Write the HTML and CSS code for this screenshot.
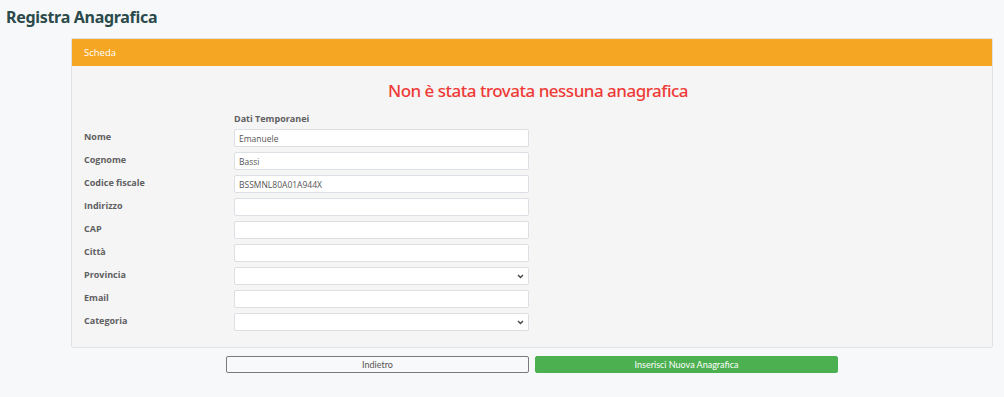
FILE: index.html
```html
<!DOCTYPE html>
<html lang="it">
<head>
    <meta charset="UTF-8">
    <meta name="viewport" content="width=device-width, initial-scale=1.0">
    <title>Registra Anagrafica</title>
    <link rel="stylesheet" href="styles.css">
</head>
<body>
    <h1 class="page-title">Registra Anagrafica</h1>

    <div class="content">
        <div class="card">
            <div class="card-header">Scheda</div>
            <div class="card-body">
                <h2 class="not-found">Non è stata trovata nessuna anagrafica</h2>

                <form class="form-grid">
                    <span></span>
                    <span class="col-title">Dati Temporanei</span>

                    <label for="nome">Nome</label>
                    <input type="text" id="nome" value="Emanuele">

                    <label for="cognome">Cognome</label>
                    <input type="text" id="cognome" value="Bassi">

                    <label for="cf">Codice fiscale</label>
                    <input type="text" id="cf" value="BSSMNL80A01A944X">

                    <label for="indirizzo">Indirizzo</label>
                    <input type="text" id="indirizzo">

                    <label for="cap">CAP</label>
                    <input type="text" id="cap">

                    <label for="citta">Città</label>
                    <input type="text" id="citta">

                    <label for="provincia">Provincia</label>
                    <select id="provincia"><option></option></select>

                    <label for="email">Email</label>
                    <input type="text" id="email">

                    <label for="categoria">Categoria</label>
                    <select id="categoria"><option></option></select>
                </form>
            </div>
        </div>

        <div class="actions">
            <button class="btn btn-back">Indietro</button>
            <button class="btn btn-save">Inserisci Nuova Anagrafica</button>
        </div>
    </div>
</body>
</html>
```

FILE: styles.css
```css
body {
    margin: 0;
    background-color: #f7f8fa;
    font-family: "Open Sans", sans-serif;
    color: #555;
}
.page-title {
    margin: 0;
    padding: 5px 6px 0;
    height: 33px;
    font-family: "Noto Sans", sans-serif;
    font-size: 16px;
    line-height: 24px;
    font-weight: 700;
    letter-spacing: -0.3px;
    color: #2b4a4b;
}
.content {
    margin: 0 11px 0 71px;
}
.card {
    border: 1px solid #e2e2e2;
    border-radius: 2px;
    background-color: #f5f5f5;
}
.card-header {
    height: 27px;
    line-height: 27px;
    padding-left: 12px;
    background-color: #f5a623;
    color: #fff;
    font-size: 9.5px;
}
.card-body {
    padding: 13px 0 16px 12px;
}
.not-found {
    margin: 0 0 10px;
    text-align: center;
    font-family: "Noto Sans", sans-serif;
    font-size: 17px;
    line-height: 24px;
    font-weight: 500;
    letter-spacing: -0.5px;
    color: #ef3b37;
}
.form-grid {
    display: grid;
    grid-template-columns: 150px 295px;
    row-gap: 5px;
    align-items: center;
}
.form-grid label,
.col-title {
    font-size: 9px;
    font-weight: 700;
    color: #5f6062;
}
.form-grid label {
    align-self: start;
    padding-top: 1px;
}
.col-title {
    line-height: 12px;
    margin-bottom: -1px;
}
.form-grid input,
.form-grid select {
    box-sizing: border-box;
    height: 18px;
    width: 295px;
    margin: 0;
    padding: 0 4px;
    border: 1px solid #dcdfe3;
    border-radius: 2px;
    background-color: #fff;
    font-family: "Open Sans", sans-serif;
    font-size: 8.5px;
    color: #555;
}
.form-grid select {
    appearance: none;
    background-image: url("data:image/svg+xml,%3Csvg xmlns='http://www.w3.org/2000/svg' width='7' height='5' viewBox='0 0 7 5'%3E%3Cpath d='M1 1l2.5 2.5L6 1' fill='none' stroke='%23444' stroke-width='1.4'/%3E%3C/svg%3E");
    background-repeat: no-repeat;
    background-position: right 4px center;
}
.actions {
    display: flex;
    justify-content: center;
    gap: 6px;
    margin-top: 8px;
}
.btn {
    box-sizing: border-box;
    width: 303px;
    height: 17px;
    border-radius: 2px;
    font-family: "Lato", sans-serif;
    font-size: 9px;
    cursor: pointer;
}
.btn-back {
    border: 1px solid #7a7a7a;
    background-color: #f8f9fa;
    color: #555;
}
.btn-save {
    border: 1px solid #4caf50;
    background-color: #4caf50;
    color: #fff;
}
```
